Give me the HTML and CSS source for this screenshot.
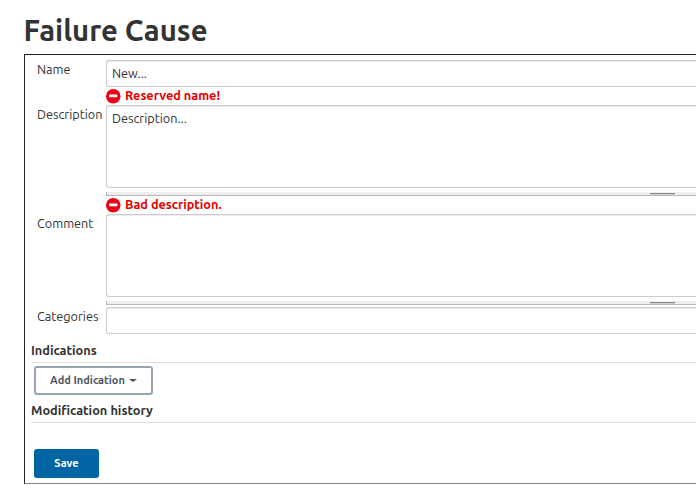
FILE: index.html
```
<!DOCTYPE html>
<html lang="en">
<head>
<meta charset="utf-8">
<title>Failure Cause</title>
<link rel="stylesheet" href="styles.css">
</head>
<body>
<h1>Failure Cause</h1>
<form class="panel">
  <div class="row row-name">
    <label>Name</label>
    <div class="field">
      <div class="control input">New...</div>
      <div class="error"><svg class="stop" viewBox="0 0 14 14"><circle cx="7" cy="7" r="7" fill="#ee0016"/><rect x="3" y="5.2" width="8" height="2.8" rx=".5" fill="#fff"/></svg><span>Reserved name!</span></div>
    </div>
  </div>
  <div class="row row-desc">
    <label>Description</label>
    <div class="field">
      <div class="control area">Description...</div>
      <div class="handle"><i></i></div>
      <div class="error"><svg class="stop" viewBox="0 0 14 14"><circle cx="7" cy="7" r="7" fill="#ee0016"/><rect x="3" y="5.2" width="8" height="2.8" rx=".5" fill="#fff"/></svg><span>Bad description.</span></div>
    </div>
  </div>
  <div class="row row-comment">
    <label>Comment</label>
    <div class="field">
      <div class="control area"></div>
      <div class="handle"><i></i></div>
    </div>
  </div>
  <div class="row row-cat">
    <label>Categories</label>
    <div class="field"><div class="control input"></div></div>
  </div>
  <h2 class="first">Indications</h2>
  <button type="button" class="add">Add Indication<i class="caret"></i></button>
  <h2 class="second">Modification history</h2>
  <button type="button" class="save">Save</button>
</form>
</body>
</html>
```
FILE: styles.css
```
* { box-sizing: border-box; }
body {
  margin: 0;
  padding: 8px 0 0 24px;
  background: #fff;
  color: #333;
  font: 12.7px/18px Ubuntu, "Noto Sans", sans-serif;
}
h1 {
  margin: 0 0 0 -0.5px;
  height: 46px;
  font-size: 29.3px;
  line-height: 46px;
  font-weight: 700;
}
.panel {
  height: 430px;
  padding: 5px 0 0 6px;
  border: 1px solid #222;
  border-bottom-color: #808080;
  border-right: 0;
}
.row {
  display: grid;
  grid-template-columns: 69px 1fr;
  margin-left: 6px;
}
.row label { white-space: nowrap; }
.row-name { height: 45px; }
.row-desc { height: 109px; }
.row-comment { height: 93px; }
.row-cat { height: 27px; }
.control {
  padding: 3px 5px;
  border: 1px solid #ccc;
  border-right: 0;
  border-radius: 3px 0 0 3px;
  box-shadow: inset 0 1px 0 #eee;
}
.input { height: 27px; }
.area { height: 83px; }
.handle {
  height: 4px;
  margin-top: 4px;
  padding: 1px 0 0 543px;
  background: #eee;
  border-bottom: 1px solid #b8b8b8;
  border-left: 1px solid #b8b8b8;
}
.handle i {
  display: block;
  width: 25px;
  height: 1px;
  background: #888;
  box-shadow: 0 1px 0 #d0d0d0;
}
.error {
  display: flex;
  height: 18px;
  line-height: 16px;
  color: #e60000;
  font-weight: 700;
  white-space: nowrap;
}
.stop {
  width: 14.5px;
  height: 14.5px;
  margin: 2px 4.5px 0 0;
}
h2 {
  margin: 0;
  font-size: 12.8px;
  line-height: 18px;
  font-weight: 700;
  border-bottom: 1px solid #ddd;
}
.first { height: 22px; margin-top: 7px; }
.second { height: 22px; margin-top: 6px; }
button {
  display: flex;
  align-items: center;
  justify-content: center;
  margin-left: 3px;
  padding: 0 0 1px;
  font-family: inherit;
  font-size: 11px;
  font-weight: 700;
  border-radius: 3px;
  white-space: nowrap;
}
.add {
  width: 119px;
  height: 29px;
  margin-top: 3px;
  color: #4d545d;
  background: #fff;
  border: 2px solid #98a4b1;
}
.caret {
  margin: 1px 0 0 4px;
  border: 4px solid transparent;
  border-top: 3px solid #4d545d;
  border-bottom: 0;
}
.save {
  width: 65px;
  height: 29px;
  margin-top: 26px;
  color: #fff;
  background: #0065a3;
  border: 0;
}
```
